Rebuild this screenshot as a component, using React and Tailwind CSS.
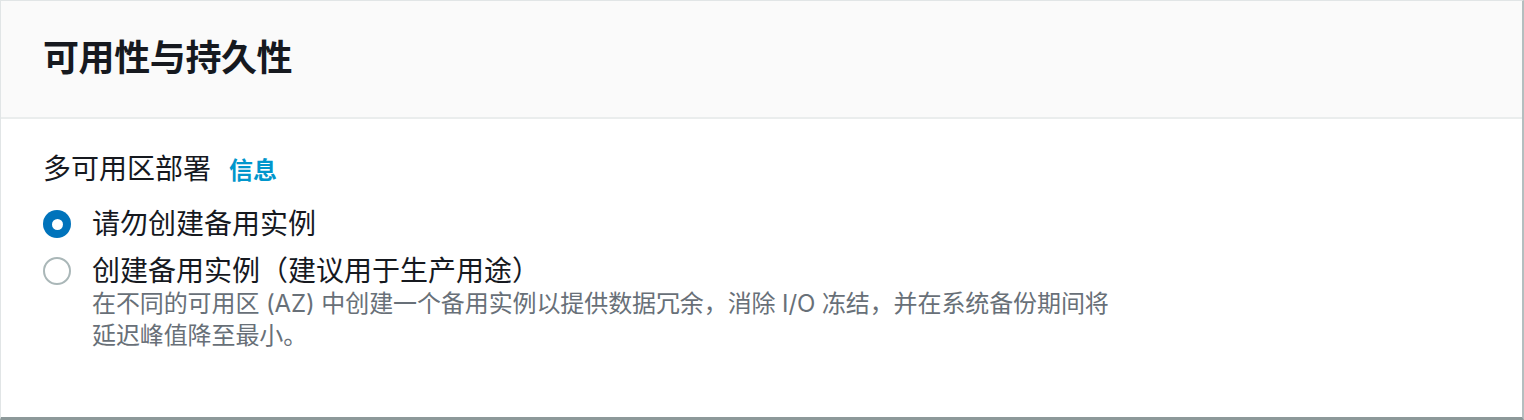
import { useState } from "react";

const FONT = { fontFamily: 'Inter, "Noto Sans CJK SC", sans-serif' };

function Radio({ checked }) {
  return checked ? (
    <span className="mt-[3px] flex h-[28px] w-[28px] shrink-0 items-center justify-center rounded-full bg-[#0073bb]">
      <span className="h-[11px] w-[11px] rounded-full bg-white" />
    </span>
  ) : (
    <span className="mt-[3px] h-[28px] w-[28px] shrink-0 rounded-full border-2 border-[#aab7b8] bg-white" />
  );
}

export default function App() {
  const [choice, setChoice] = useState("none");

  const options = [
    { id: "none", label: "请勿创建备用实例" },
    {
      id: "standby",
      label: "创建备用实例（建议用于生产用途）",
      desc: (
        <>
          在不同的可用区 (AZ) 中创建一个备用实例以提供数据冗余，消除 I/O 冻结，并在系统备份期间将
          <br />
          延迟峰值降至最小。
        </>
      ),
    },
  ];

  return (
    <div className="h-[420px] w-[1524px] bg-white" style={FONT}>
      <div className="flex h-[420px] w-[1524px] flex-col border-t border-l border-[#e1e5e6] border-r-2 border-r-[#b4bebf] border-b-[3px] border-b-[#8d999a]">
        <div className="flex h-[118px] shrink-0 items-center border-b-2 border-[#eaeded] bg-[#fafafa] pl-[42px] pb-[2px]">
          <h2 className="text-[36px] leading-[44px] font-bold tracking-[-0.4px] text-[#16191f]">可用性与持久性</h2>
        </div>

        <div className="flex flex-col pt-[30px] pl-[42px]">
          <div className="flex items-baseline text-[#16191f]">
            <span className="text-[28px] leading-[40px]">多可用区部署</span>
            <a className="ml-[18px] text-[24px] leading-[40px] font-bold text-[#0096cc]">信息</a>
          </div>

          <div className="mt-[16px] flex flex-col gap-[13px]">
            {options.map((o) => (
              <label
                key={o.id}
                className="flex cursor-pointer items-start gap-[21px]"
                onClick={() => setChoice(o.id)}
              >
                <Radio checked={choice === o.id} />
                <div className="flex flex-col">
                  <span className="text-[28px] leading-[34px] text-[#16191f]">{o.label}</span>
                  {o.desc && (
                    <span className="text-[24px] leading-[32px] tracking-[-0.1px] text-[#687078]">{o.desc}</span>
                  )}
                </div>
              </label>
            ))}
          </div>
        </div>
      </div>
    </div>
  );
}
